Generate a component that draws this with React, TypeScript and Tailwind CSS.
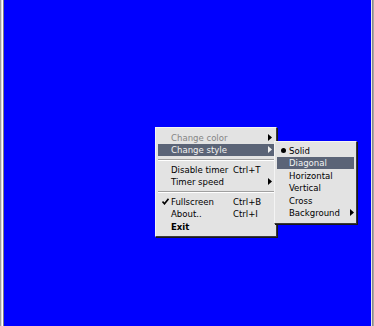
import React from 'react'

type Item =
  | { sep: true }
  | {
      sep?: false
      label: string
      shortcut?: string
      arrow?: boolean
      check?: boolean
      bullet?: boolean
      active?: boolean
      disabled?: boolean
      bold?: boolean
    }

const MAIN: Item[] = [
  { label: 'Change color', arrow: true, disabled: true },
  { label: 'Change style', arrow: true, active: true },
  { sep: true },
  { label: 'Disable timer', shortcut: 'Ctrl+T' },
  { label: 'Timer speed', arrow: true },
  { sep: true },
  { label: 'Fullscreen', shortcut: 'Ctrl+B', check: true },
  { label: 'About..', shortcut: 'Ctrl+I' },
  { label: 'Exit', bold: true },
]

const STYLES: Item[] = [
  { label: 'Solid', bullet: true },
  { label: 'Diagonal', active: true },
  { label: 'Horizontal' },
  { label: 'Vertical' },
  { label: 'Cross' },
  { label: 'Background', arrow: true },
]

function Arrow({ light }: { light?: boolean }) {
  return (
    <svg width="4" height="7" viewBox="0 0 4 7" className="block">
      <path d="M0 0 L4 3.5 L0 7 Z" fill={light ? '#f0f0f0' : '#000'} />
    </svg>
  )
}

function Check() {
  return (
    <svg width="7" height="7" viewBox="0 0 7 7" className="block">
      <path d="M0.5 3.5 L2.5 5.8 L6.5 0.8" stroke="#000" strokeWidth="1.6" fill="none" />
    </svg>
  )
}

function Menu({ items, sub }: { items: Item[]; sub?: boolean }) {
  return (
    <div
      className={
        'bg-[#e3e3e3] border border-t-[#f4f4f4] border-l-[#f4f4f4] border-r-[#3a3a3a] border-b-[#3a3a3a] shadow-[1px_1px_0_#1a1a1a] ' +
        (sub ? 'pt-[2px] pb-[4px]' : 'py-[3px]')
      }
    >
      {items.map((it, i) =>
        it.sep ? (
          <div key={i} className="h-[7px] flex flex-col justify-center px-[2px]">
            <div className="h-px bg-[#a0a0a0]" />
            <div className="h-px bg-white" />
          </div>
        ) : (
          <div
            key={i}
            className={
              'relative h-[12.5px] flex items-center mx-[2px] text-[9.5px] leading-none ' +
              (it.active ? 'bg-[#5b6477] text-[#f2f2f2] ' : '') +
              (it.disabled ? 'text-[#858585] ' : !it.active ? 'text-black ' : '') +
              (it.bold ? 'font-bold ' : '')
            }
          >
            <span className={sub ? 'w-[12px] flex justify-center' : 'w-[13px] flex justify-center pl-[2px]'}>
              {it.check && <Check />}
              {it.bullet && <span className="block w-[5px] h-[5px] rounded-full bg-black" />}
            </span>
            <span className={sub ? 'w-[60px]' : 'w-[62px]'}>{it.label}</span>
            {it.shortcut && <span>{it.shortcut}</span>}
            {it.arrow && (
              <span className={sub ? 'absolute left-[73px]' : 'absolute left-[110px]'}>
                <Arrow light={it.active} />
              </span>
            )}
          </div>
        ),
      )}
    </div>
  )
}

export default function App() {
  return (
    <div
      className="w-[374px] h-[326px] flex overflow-hidden"
      style={{ fontFamily: '"DejaVu Sans Condensed", "Liberation Sans", sans-serif' }}
    >
      {/* left window edge */}
      <div className="w-px bg-[#9c9c9c]" />
      <div className="w-px bg-[#dcdcdc]" />
      <div className="w-px bg-white" />
      <div className="w-px bg-[#808080]" />
      {/* canvas */}
      <div className="relative flex-1 bg-[#0000ff]">
        <div className="absolute left-[151px] top-[127px] w-[122px]">
          <Menu items={MAIN} />
        </div>
        <div className="absolute left-[270px] top-[141px] w-[83px]">
          <Menu items={STYLES} sub />
        </div>
      </div>
      {/* right window edge */}
      <div className="w-px bg-[#e8e8e8]" />
      <div className="w-px bg-[#8a8a8a]" />
      <div className="w-px bg-[#a8a8a8]" />
    </div>
  )
}
